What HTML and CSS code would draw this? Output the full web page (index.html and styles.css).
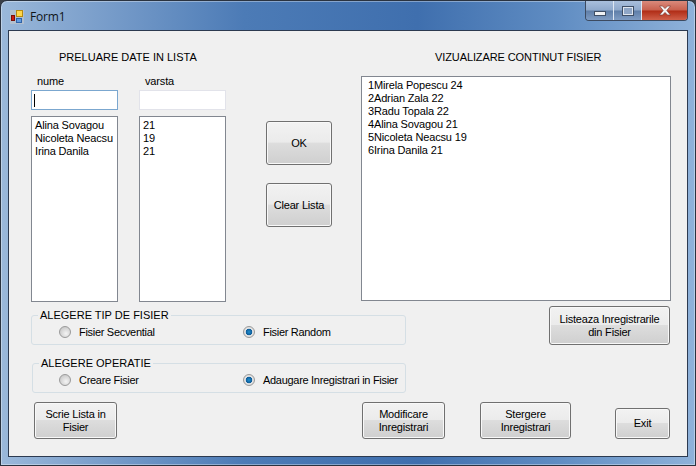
FILE: index.html
```html
<!DOCTYPE html>
<html lang="ro">
<head>
<meta charset="utf-8">
<title>Form1</title>
<link rel="stylesheet" href="styles.css">
</head>
<body>
<div class="window">
  <div class="titlebar">
    <svg class="app-icon" width="14" height="14" viewBox="0 0 14 14">
      <rect x="0" y="0" width="14" height="14" fill="#c9c9c9" opacity="0.55"/>
      <rect x="1.500" y="5.500" width="3" height="5" fill="#d01a10" stroke="#7a1008"/>
      <rect x="6.500" y="0.500" width="6" height="6" fill="#ffd64a" stroke="#b58a10"/>
      <rect x="6.500" y="8.500" width="5" height="4" fill="#5f9be0" stroke="#2f62a8"/>
    </svg>
    <span class="title-text">Form1</span>
    <div class="caption">
      <div class="cap cap-min"><span class="min-glyph"></span></div>
      <div class="cap cap-max"><span class="max-glyph"></span></div>
      <div class="cap cap-close">
        <svg width="14" height="11" viewBox="0 0 14 11"><path d="M1.500 1h3l2.500 2.600L9.500 1h3L8.800 5.500l3.700 4.500h-3L7 7.400 4.500 10h-3l3.700-4.500z" fill="#f4f4f4" stroke="#70302a" stroke-width="0.6"/></svg>
      </div>
    </div>
  </div>
  <div class="client">
    <div class="top-row">
      <section class="left-panel">
        <h2 class="heading heading-left">PRELUARE DATE IN LISTA</h2>
        <div class="input-cols">
          <div class="input-col">
            <label class="field-label label-nume">nume</label>
            <div class="textbox focused"><span class="caret"></span></div>
            <div class="listbox">
              <div>Alina Sovagou</div>
              <div>Nicoleta Neacsu</div>
              <div>Irina Danila</div>
            </div>
          </div>
          <div class="input-col">
            <label class="field-label label-varsta">varsta</label>
            <div class="textbox"></div>
            <div class="listbox">
              <div>21</div>
              <div>19</div>
              <div>21</div>
            </div>
          </div>
        </div>
      </section>
      <div class="center-buttons">
        <button class="btn btn-center">OK</button>
        <button class="btn btn-center">Clear Lista</button>
      </div>
      <section class="right-panel">
        <h2 class="heading heading-right">VIZUALIZARE CONTINUT FISIER</h2>
        <div class="listbox listbox-wide">
          <div>1Mirela Popescu 24</div>
          <div>2Adrian Zala 22</div>
          <div>3Radu Topala 22</div>
          <div>4Alina Sovagou 21</div>
          <div>5Nicoleta Neacsu 19</div>
          <div>6Irina Danila 21</div>
        </div>
      </section>
    </div>
    <div class="middle-row">
      <div class="groups">
        <fieldset class="group group-first">
          <legend>ALEGERE TIP DE FISIER</legend>
          <div class="radio-row">
            <span class="radio-item item-a"><span class="radio"></span>Fisier Secvential</span>
            <span class="radio-item"><span class="radio checked"></span>Fisier Random</span>
          </div>
        </fieldset>
        <fieldset class="group group-second">
          <legend>ALEGERE OPERATIE</legend>
          <div class="radio-row">
            <span class="radio-item item-b"><span class="radio"></span>Creare Fisier</span>
            <span class="radio-item"><span class="radio checked"></span>Adaugare Inregistrari in Fisier</span>
          </div>
        </fieldset>
      </div>
      <button class="btn btn-list">Listeaza Inregistrarile<br>din Fisier</button>
    </div>
    <div class="bottom-row">
      <button class="btn btn-write">Scrie Lista in<br>Fisier</button>
      <button class="btn btn-mod">Modificare<br>Inregistrari</button>
      <button class="btn btn-del">Stergere<br>Inregistrari</button>
      <button class="btn btn-exit">Exit</button>
    </div>
  </div>
</div>
</body>
</html>
```
FILE: styles.css
```css
* { box-sizing: border-box; }
html, body { margin: 0; padding: 0; width: 696px; height: 466px; overflow: hidden; background: #3a4048; }
body { font-family: "Liberation Sans", Arial, sans-serif; font-size: 11px; letter-spacing: -0.15px; color: #000; }

.window {
  width: 696px;
  height: 466px;
  border: 1px solid #2a3340;
  border-radius: 7px 7px 0 0;
  padding: 0 7px 8px 7px;
  display: flex;
  flex-direction: column;
  background:
    linear-gradient(90deg, #9ab8da 0%, #7fa2cd 12%, #4c7bb6 35%, #3f6fae 60%, #5f8cc2 80%, #8fb2da 100%);
  box-shadow: inset 0 0 0 1px rgba(255,255,255,0.35);
}

.titlebar {
  height: 29px;
  flex: none;
  display: flex;
  align-items: flex-start;
}
.app-icon { margin: 9px 0 0 2px; flex: none; }
.title-text {
  font-family: "Open Sans", "Noto Sans", sans-serif;
  font-size: 12px;
  letter-spacing: -0.2px;
  line-height: 16px;
  margin: 8px 0 0 6px;
  color: #101418;
}
.caption {
  margin-left: auto;
  margin-right: 0;
  display: flex;
  height: 20px;
  border: 1px solid #3c4a60;
  border-top: none;
  border-radius: 0 0 4px 4px;
  overflow: hidden;
  width: 103px;
  flex: none;
}
.cap { display: flex; align-items: center; justify-content: center; }
.cap-min, .cap-max {
  width: 28px;
  background: linear-gradient(#a9bfdc 0%, #8fa9cb 48%, #5f7ea8 52%, #7f9cc3 100%);
  border-right: 1px solid #dfe7f2;
}
.cap-close {
  flex: 1;
  background: linear-gradient(#d98a7c 0%, #c8604e 48%, #b02c16 52%, #d0604a 100%);
}
.min-glyph {
  width: 12px;
  height: 5px;
  margin-top: 6px;
  background: #f0f2f5;
  border: 1px solid #3f4f66;
}
.max-glyph {
  width: 12px;
  height: 10px;
  border: 1px solid #3f4f66;
  outline: 1px solid #dfe5ee;
  outline-offset: -2px;
  background: #8fa6c6;
}

.client {
  flex: 1;
  min-height: 0;
  width: 680px;
  background: #f0f0f0;
  border: 1px solid #2c3a50;
  padding: 0 0 0 22px;
  display: flex;
  flex-direction: column;
}

.top-row { display: flex; height: 271px; flex: none; }
.left-panel { width: 195px; flex: none; }
.heading {
  margin: 0;
  font-weight: normal;
  font-size: 11px;
  letter-spacing: 0;
  line-height: 14px;
}
.heading-left { padding: 19px 0 0 28px; }
.input-cols { display: flex; gap: 21px; margin-top: 10px; }
.input-col { width: 87px; }
.field-label { display: block; line-height: 14px; }
.label-nume { padding-left: 6px; }
.label-varsta { padding-left: 6px; }
.textbox {
  height: 20px;
  margin-top: 2px;
  background: #fff;
  border: 1px solid #e2e3ea;
  display: flex;
  align-items: center;
  padding-left: 2px;
}
.textbox.focused { border-color: #7ba7cf; }
.caret { width: 1px; height: 13px; background: #000; }
.listbox {
  height: 186px;
  margin-top: 6px;
  background: #fff;
  border: 1px solid #828790;
  padding: 2px 3px;
  line-height: 13px;
  white-space: nowrap;
}
.center-buttons {
  width: 66px;
  flex: none;
  margin-left: 40px;
  padding-top: 90px;
  display: flex;
  flex-direction: column;
  gap: 18px;
}
.btn {
  font: inherit;
  letter-spacing: -0.2px;
  line-height: 13px;
  color: #000;
  padding: 0;
  border: 1px solid #707070;
  border-radius: 3px;
  box-shadow: inset 0 0 0 1px #f8f8f8;
  background: linear-gradient(#f2f2f2 0%, #ebebeb 48%, #dddddd 50%, #cfcfcf 100%);
  flex: none;
}
.btn-center { height: 44px; }
.right-panel { width: 310px; flex: none; margin-left: 29px; }
.heading-right { padding: 19px 0 0 74px; letter-spacing: -0.1px; }
.listbox-wide { height: 225px; margin-top: 12px; padding: 2px 6px; }

.middle-row { display: flex; align-items: flex-start; height: 100px; flex: none; }
.groups { width: 376px; flex: none; display: flex; flex-direction: column; }
.group {
  margin: 0;
  padding: 0;
  height: 37px;
  border: 1px solid #d5dfe5;
  border-radius: 3px;
}
.group legend { padding: 0 2px; line-height: 14px; letter-spacing: 0; }
.group-first { margin-top: 6px; width: 375px; }
.group-first legend { margin-left: 6px; }
.group-second { margin-top: 11px; width: 374px; align-self: flex-end; margin-right: 1px; }
.group-second legend { margin-left: 6px; }
.radio-row { display: flex; height: 20px; align-items: center; white-space: nowrap; letter-spacing: -0.3px; }
.radio-item { display: flex; align-items: center; gap: 8px; }
.item-a { width: 184px; margin-left: 27px; }
.item-b { width: 184px; margin-left: 26px; }
.radio {
  width: 12px;
  height: 12px;
  border-radius: 50%;
  flex: none;
  border: 1px solid #9a9a9a;
  background: radial-gradient(circle at 60% 65%, #f4f4f4 0%, #d8d8d8 50%, #bdbdbd 100%);
}
.radio.checked {
  background: radial-gradient(circle closest-side, #1f8fd0 0%, #0e5a96 62%, #e8e8e8 72%, #dcdcdc 100%);
}
.btn-list { width: 121px; height: 39px; margin: 4px 0 0 142px; }

.bottom-row { display: flex; align-items: flex-end; height: 37px; flex: none; }
.btn-write { width: 83px; height: 37px; margin-left: 3px; }
.btn-mod { width: 83px; height: 37px; margin-left: 245px; }
.btn-del { width: 91px; height: 37px; margin-left: 35px; }
.btn-exit { width: 55px; height: 31px; margin-left: 44px; }
```
